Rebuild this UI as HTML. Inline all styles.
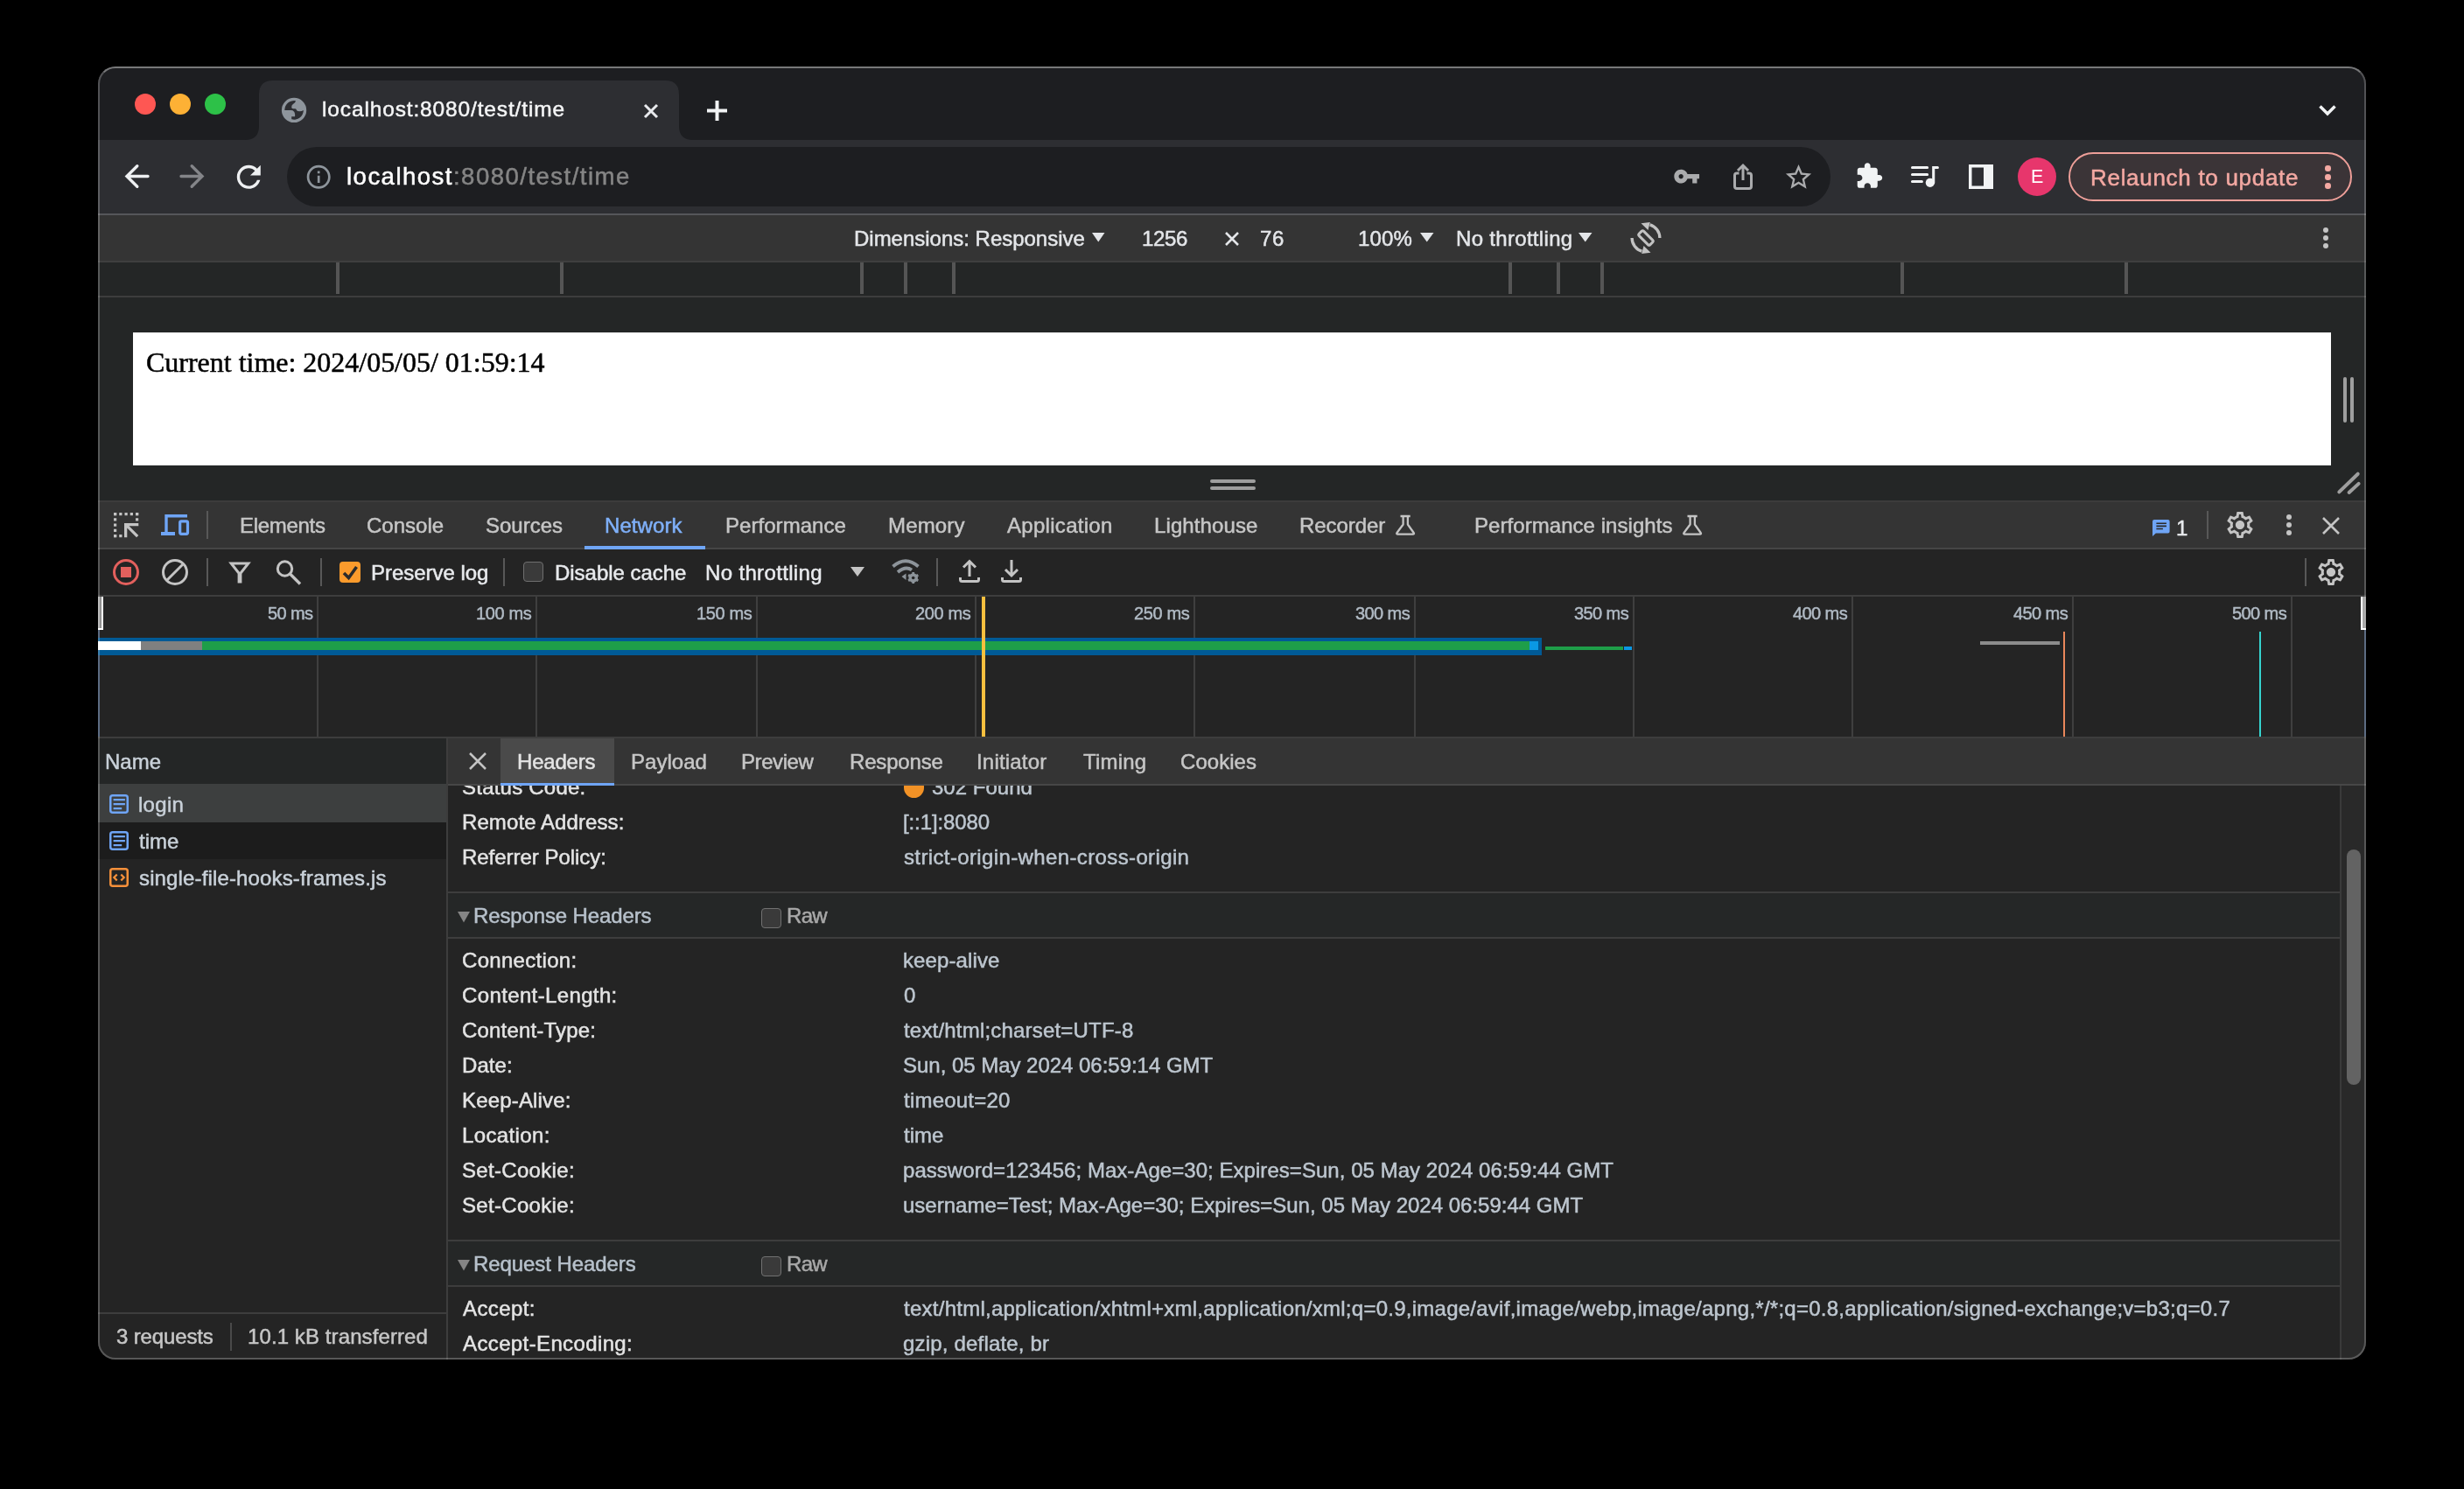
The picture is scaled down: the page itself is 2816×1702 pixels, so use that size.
<!DOCTYPE html>
<html><head><meta charset="utf-8"><title>localhost:8080/test/time</title>
<style>
*{box-sizing:border-box;margin:0;padding:0}
html,body{width:2816px;height:1702px;background:#000;overflow:hidden}
body{position:relative;font-family:"Liberation Sans",sans-serif;font-size:24px;color:#e8eaed}
.win{position:absolute;left:112px;top:76px;width:2592px;height:1478px;border-radius:20px;overflow:hidden;background:#242424}
.o{position:absolute;left:-112px;top:-76px;width:2816px;height:1702px}
.a{position:absolute}
.t{position:absolute;white-space:pre;line-height:1;will-change:transform;-webkit-text-stroke:0.5px currentColor}
.winborder{position:absolute;left:112px;top:76px;width:2592px;height:1478px;border-radius:20px;border:2px solid rgba(255,255,255,0.235);border-top-color:rgba(255,255,255,0.40);pointer-events:none}
.hl{position:absolute;height:2px}
.vl{position:absolute;width:2px}
svg{position:absolute;overflow:visible}
</style></head><body>
<div class="win"><div class="o">
<div class="a" style="left:112px;top:76px;width:2592px;height:84px;background:#1d1e21;"></div>
<div class="a" style="left:154px;top:107px;width:24px;height:24px;background:#fe5753;border-radius:50%"></div>
<div class="a" style="left:194px;top:107px;width:24px;height:24px;background:#fdb135;border-radius:50%"></div>
<div class="a" style="left:234px;top:107px;width:24px;height:24px;background:#2dc148;border-radius:50%"></div>
<svg style="left:280px;top:92px" width="512" height="68"><path d="M0 68 Q16 68 16 52 V16 Q16 0 32 0 H480 Q496 0 496 16 V52 Q496 68 512 68 Z" fill="#2d2e32"/></svg>
<svg style="left:316px;top:106px" width="40" height="40"><circle cx="20.050" cy="19.900" r="14.150" fill="#8e959c"/><path d="M9.250 19.900A10.800 10.800 0 0 1 22 9.250Q21.500 11.500 19.500 12.500Q17 14 17.200 16.500Q17.200 18.300 19 18.300H21.300Q22.800 18.500 23 20Q23.500 21.200 26.600 21.300Q28.800 21.200 30.850 19.900A10.800 10.800 0 0 1 17.200 30.350V27.300H21.100V24.500Q21 21.800 18.500 20.300Q17.500 19.900 16.500 19.900Z" fill="#2d2e32"/></svg>
<svg style="left:736px;top:118.5px" width="16" height="16"><path d="M1 1L15 15M15 1L1 15" stroke="#e8eaed" stroke-width="3" fill="none"/></svg>
<svg style="left:808px;top:114.5px" width="23" height="23"><path d="M11.5 0V23M0 11.5H23" stroke="#f1f3f4" stroke-width="4" fill="none"/></svg>
<svg style="left:2650px;top:120px" width="20" height="12"><path d="M1.5 1.5L10 10L18.5 1.5" stroke="#f1f3f4" stroke-width="3.5" fill="none"/></svg>
<div class="a" style="left:112px;top:160px;width:2592px;height:84px;background:#2d2e32;"></div>
<div class="a" style="left:328px;top:168px;width:1764px;height:68px;background:#1d1e21;border-radius:34px"></div>
<svg style="left:140px;top:186px" width="32" height="32"><path d="M29 15.500H5M16.800 3.800L5 15.500L16.800 27.200" fill="none" stroke="#eef0f2" stroke-width="3.400" stroke-linecap="round"/></svg>
<svg style="left:204px;top:186px" width="32" height="32"><path d="M3 15.500H27M15.200 3.800L27 15.500L15.200 27.200" fill="none" stroke="#848589" stroke-width="3.400" stroke-linecap="round"/></svg>
<svg style="left:263.72px;top:181.72px" width="40.56" height="40.56" viewBox="0 0 24 24"><path d="M17.65 6.35C16.2 4.9 14.21 4 12 4c-4.42 0-7.99 3.58-7.99 8s3.57 8 7.99 8c3.73 0 6.84-2.55 7.73-6h-2.08c-.82 2.33-3.04 4-5.65 4-3.31 0-6-2.69-6-6s2.69-6 6-6c1.66 0 3.14.69 4.22 1.78L13 11h7V4l-2.35 2.35z" fill="#eef0f2" /></svg>
<svg style="left:347.80px;top:186.30px" width="32.40" height="32.40" viewBox="0 0 24 24"><path d="M11 7h2v2h-2zm0 4h2v6h-2zm1-9C6.48 2 2 6.48 2 12s4.48 10 10 10 10-4.48 10-10S17.52 2 12 2zm0 18c-4.41 0-8-3.59-8-8s3.590-8 8-8 8 3.590 8 8-3.590 8-8 8z" fill="#8e959c" /></svg>
<svg style="left:1912.32px;top:185.82px" width="31.37" height="31.37" viewBox="0 0 24 24"><path d="M12.65 10C11.83 7.67 9.61 6 7 6c-3.31 0-6 2.69-6 6s2.69 6 6 6c2.61 0 4.83-1.67 5.65-4H17v4h4v-4h2v-4H12.65zM7 14c-1.1 0-2-.9-2-2s.9-2 2-2 2 .9 2 2-.9 2-2 2z" fill="#aaabad" /></svg>
<svg style="left:1981px;top:187px" width="22" height="30"><path d="M6.5 11H4Q1.5 11 1.5 13.500V26Q1.5 28.500 4 28.500H18Q20.5 28.500 20.5 26V13.500Q20.5 11 18 11H15.500" stroke="#aaabad" stroke-width="3" fill="none"/><path d="M11 19V3M5 8L11 2L17 8" stroke="#aaabad" stroke-width="3" fill="none"/></svg>
<svg style="left:2038.48px;top:184.78px" width="35.04" height="35.04" viewBox="0 0 24 24"><path d="M22 9.24l-7.19-.62L12 2 9.19 8.63 2 9.24l5.46 4.73L5.82 21 12 17.27 18.18 21l-1.63-7.03L22 9.24zM12 15.4l-3.76 2.27 1-4.28-3.32-2.88 4.38-.38L12 6.1l1.71 4.04 4.38.38-3.32 2.88 1 4.28L12 15.4z" fill="#aaabad" /></svg>
<svg style="left:2119.72px;top:185.22px" width="32.57" height="32.57" viewBox="0 0 24 24"><path d="M20.5 11H19V7c0-1.1-.9-2-2-2h-4V3.5C13 2.12 11.88 1 10.5 1S8 2.12 8 3.5V5H4c-1.1 0-1.99.9-1.99 2v3.8H3.5c1.49 0 2.7 1.21 2.7 2.7s-1.21 2.7-2.7 2.7H2V20c0 1.1.9 2 2 2h3.8v-1.500c0-1.49 1.21-2.7 2.7-2.7 1.49 0 2.7 1.21 2.7 2.7V22H17c1.1 0 2-.9 2-2v-4h1.500c1.38 0 2.5-1.12 2.5-2.5S21.88 11 20.5 11z" fill="#f1f3f4" /></svg>
<svg style="left:2176px;top:180px" width="48" height="44"><g fill="none" stroke="#f1f3f4" stroke-width="3.100" stroke-linecap="round"><path d="M9.500 11.500H26.600M9.500 19.500H26.600M9.500 27.500H20.400M33.700 29V11.500H38.400"/></g><circle cx="29.800" cy="28.800" r="5.100" fill="#f1f3f4"/></svg>
<svg style="left:2250px;top:188px" width="28" height="28"><path d="M0 0H28V28H0Z M3.500 3.500V24.500H17V3.500Z" fill="#f1f3f4" fill-rule="evenodd"/></svg>
<div class="a" style="left:2306px;top:180px;width:44px;height:44px;background:#e7366c;border-radius:50%"></div>
<div class="a" style="left:2364px;top:174px;width:324px;height:56px;background:#3b3437;border-radius:28px;border:2px solid #ee9f99"></div>
<div class="a" style="left:2657px;top:189px;width:6.5px;height:6.5px;background:#f3a8a2;border-radius:50%"></div>
<div class="a" style="left:2657px;top:199px;width:6.5px;height:6.5px;background:#f3a8a2;border-radius:50%"></div>
<div class="a" style="left:2657px;top:209px;width:6.5px;height:6.5px;background:#f3a8a2;border-radius:50%"></div>
<div class="a" style="left:112px;top:244px;width:2592px;height:2px;background:#55565a"></div>
<div class="a" style="left:112px;top:246px;width:2592px;height:52px;background:#343434;"></div>
<div class="a" style="left:112px;top:298px;width:2592px;height:2px;background:#3f3f3f"></div>
<svg style="left:1247.5px;top:266px" width="14.5" height="10.5"><path d="M0 0H14.5L7.25 10.5Z" fill="#e4e6e9"/></svg>
<svg style="left:1400px;top:265px" width="16" height="16"><path d="M1 1L15 15M15 1L1 15" stroke="#e4e6e9" stroke-width="2.6" fill="none"/></svg>
<svg style="left:1622.5px;top:266px" width="15.5" height="10.5"><path d="M0 0H15.5L7.75 10.5Z" fill="#e4e6e9"/></svg>
<svg style="left:1803.5px;top:266px" width="15.5" height="10.5"><path d="M0 0H15.5L7.75 10.5Z" fill="#e4e6e9"/></svg>
<svg style="left:1863px;top:254px" width="36" height="36"><rect x="9.100" y="14.300" width="17.800" height="7.400" rx="1.800" fill="none" stroke="#c2c2c2" stroke-width="3" transform="rotate(45 18 18)"/><path d="M33.900 18A15.900 15.900 0 0 0 22.600 2.800" fill="none" stroke="#c2c2c2" stroke-width="3.300"/><path d="M12.500 1.300L22.800 0L20.500 8.900Z" fill="#c2c2c2"/><g transform="rotate(180 18 18)"><path d="M33.900 18A15.900 15.900 0 0 0 22.600 2.800" fill="none" stroke="#c2c2c2" stroke-width="3.300"/><path d="M12.500 1.300L22.800 0L20.500 8.900Z" fill="#c2c2c2"/></g></svg>
<div class="a" style="left:2655px;top:260px;width:6px;height:6px;background:#c4c4c4;border-radius:50%"></div>
<div class="a" style="left:2655px;top:269px;width:6px;height:6px;background:#c4c4c4;border-radius:50%"></div>
<div class="a" style="left:2655px;top:278px;width:6px;height:6px;background:#c4c4c4;border-radius:50%"></div>
<div class="a" style="left:112px;top:300px;width:2592px;height:38px;background:#242626;"></div>
<div class="a" style="left:112px;top:338px;width:2592px;height:2px;background:#3d3d3d"></div>
<div class="a" style="left:1088px;top:300px;width:4px;height:36px;background:#555"></div>
<div class="a" style="left:1724px;top:300px;width:4px;height:36px;background:#555"></div>
<div class="a" style="left:1033px;top:300px;width:4px;height:36px;background:#555"></div>
<div class="a" style="left:1779px;top:300px;width:4px;height:36px;background:#555"></div>
<div class="a" style="left:983px;top:300px;width:4px;height:36px;background:#555"></div>
<div class="a" style="left:1829px;top:300px;width:4px;height:36px;background:#555"></div>
<div class="a" style="left:640px;top:300px;width:4px;height:36px;background:#555"></div>
<div class="a" style="left:2172px;top:300px;width:4px;height:36px;background:#555"></div>
<div class="a" style="left:384px;top:300px;width:4px;height:36px;background:#555"></div>
<div class="a" style="left:2428px;top:300px;width:4px;height:36px;background:#555"></div>
<div class="a" style="left:112px;top:340px;width:2592px;height:232px;background:#242626;"></div>
<div class="a" style="left:152px;top:380px;width:2512px;height:152px;background:#fff;"></div>
<div class="a" style="left:2678px;top:431px;width:4px;height:52px;background:#9e9e9e;border-radius:2px"></div>
<div class="a" style="left:2686px;top:431px;width:4px;height:52px;background:#9e9e9e;border-radius:2px"></div>
<div class="a" style="left:1383px;top:548px;width:52px;height:4px;background:#9e9e9e;border-radius:2px"></div>
<div class="a" style="left:1383px;top:556px;width:52px;height:4px;background:#9e9e9e;border-radius:2px"></div>
<svg style="left:2668px;top:536px" width="32" height="32"><path d="M5.300 26.400L26.700 5.700M16.600 27L27.600 16.900" stroke="#9e9e9e" stroke-width="4" stroke-linecap="round" fill="none"/></svg>
<div class="a" style="left:112px;top:572px;width:2592px;height:2px;background:#3c3c3c"></div>
<div class="a" style="left:112px;top:574px;width:2592px;height:52px;background:#343434;"></div>
<div class="a" style="left:112px;top:626px;width:2592px;height:2px;background:#464646"></div>
<svg style="left:130px;top:586px" width="28.3" height="28.3"><g fill="#c4c4c4"><rect x="0.0" y="0" width="3.2" height="3.2"/><rect x="0" y="0.0" width="3.2" height="3.2"/><rect x="0.0" y="25" width="3.2" height="3.2"/><rect x="25" y="0.0" width="3.2" height="3.2"/><rect x="6.25" y="0" width="3.2" height="3.2"/><rect x="0" y="6.25" width="3.2" height="3.2"/><rect x="6.25" y="25" width="3.2" height="3.2"/><rect x="25" y="6.25" width="3.2" height="3.2"/><rect x="12.5" y="0" width="3.2" height="3.2"/><rect x="0" y="12.5" width="3.2" height="3.2"/><rect x="18.75" y="0" width="3.2" height="3.2"/><rect x="0" y="18.75" width="3.2" height="3.2"/><rect x="25.0" y="0" width="3.2" height="3.2"/><rect x="0" y="25.0" width="3.2" height="3.2"/><path d="M12 12H28.300V15.300H17.500L28.300 26L26 28.300L15.300 17.500V28.300H12Z"/></g></svg>
<svg style="left:184px;top:588px" width="32" height="24"><g fill="none" stroke="#6fa5f6"><path d="M30 1.700H6V20" stroke-width="3.400"/><path d="M0 22H16" stroke-width="4"/><rect x="21.700" y="7.800" width="8.800" height="14.500" rx="1.500" stroke-width="3.200"/></g></svg>
<div class="a" style="left:236px;top:584px;width:2px;height:32px;background:#585858"></div>
<div class="a" style="left:668px;top:624px;width:138px;height:4px;background:#6fa5f6;"></div>
<svg style="left:1595px;top:588px" width="24" height="24"><path d="M5.500 2H16.700M8.600 2V11.500L1.500 21Q0.500 22.600 2.500 22.600H19.700Q21.700 22.600 20.700 21L13.900 11.500V2" fill="none" stroke="#c4c4c4" stroke-width="2.300" stroke-linejoin="round"/></svg>
<svg style="left:1923px;top:588px" width="24" height="24"><path d="M5.500 2H16.700M8.600 2V11.500L1.500 21Q0.500 22.600 2.500 22.600H19.700Q21.700 22.600 20.700 21L13.900 11.500V2" fill="none" stroke="#c4c4c4" stroke-width="2.300" stroke-linejoin="round"/></svg>
<svg style="left:2460px;top:593.5px" width="20" height="19"><path d="M2 0H17.600Q19.600 0 19.600 2V13.500Q19.600 15.500 17.600 15.500H3.800L0 19V2Q0 0 2 0Z" fill="#6fa5f6"/><path d="M4.400 3.500H15.900V5.100H4.400ZM4.400 6.600H15.900V8.200H4.400ZM4.400 9.700H11.900V11.300H4.400Z" fill="#2a2a2a"/></svg>
<div class="a" style="left:2522px;top:584px;width:2px;height:32px;background:#585858"></div>
<svg style="left:2541.50px;top:582.00px" width="36.00" height="36.00" viewBox="0 0 24 24"><path d="M19.43 12.98c.04-.32.07-.64.07-.98 0-.34-.03-.66-.07-.98l2.11-1.65c.19-.15.24-.42.12-.64l-2-3.46c-.09-.16-.26-.25-.44-.25-.06 0-.12.01-.17.03l-2.49 1c-.52-.4-1.080-.73-1.690-.98l-.38-2.650C14.460 2.180 14.250 2 14 2h-4c-.25 0-.46.18-.49.42l-.38 2.650c-.61.25-1.170.59-1.690.98l-2.490-1c-.06-.02-.12-.03-.18-.03-.17 0-.34.09-.43.25l-2 3.460c-.13.22-.07.49.12.64l2.110 1.650c-.04.32-.07.65-.07.980 0 .33.03.66.07.98l-2.110 1.650c-.19.15-.24.42-.12.64l2 3.460c.09.16.26.25.44.25.06 0 .12-.01.17-.03l2.490-1c.52.4 1.080.73 1.690.98l.38 2.650c.03.24.24.42.49.42h4c.25 0 .46-.18.49-.42l.38-2.650c.61-.25 1.170-.59 1.690-.98l2.490 1c.06.02.12.03.18.03.17 0 .34-.09.43-.25l2-3.460c.12-.22.07-.49-.12-.64l-2.110-1.650zm-1.980-1.710c.04.31.05.52.05.73 0 .21-.02.43-.05.73l-.14 1.130.89.7 1.080.84-.7 1.210-1.270-.51-1.040-.42-.9.68c-.43.32-.84.56-1.250.73l-1.060.43-.16 1.130-.2 1.350h-1.400l-.19-1.350-.16-1.130-1.060-.43c-.43-.18-.83-.41-1.230-.71l-.91-.7-1.060.43-1.270.51-.7-1.210 1.080-.84.89-.7-.14-1.130c-.03-.31-.05-.54-.05-.74s.02-.43.05-.73l.14-1.130-.89-.7-1.080-.84.7-1.210 1.270.51 1.040.42.9-.68c.43-.32.84-.56 1.250-.73l1.060-.43.16-1.130.2-1.350h1.390l.19 1.350.16 1.130 1.060.43c.43.18.83.41 1.230.71l.91.7 1.060-.43 1.270-.51.7 1.210-1.070.85-.89.7.14 1.130zM12 8.600c-1.880 0-3.400 1.520-3.400 3.400s1.520 3.400 3.400 3.400 3.400-1.520 3.400-3.400-1.520-3.400-3.400-3.400z" fill="#c4c4c4" /></svg>
<div class="a" style="left:2613px;top:588px;width:6px;height:6px;background:#c4c4c4;border-radius:50%"></div>
<div class="a" style="left:2613px;top:597px;width:6px;height:6px;background:#c4c4c4;border-radius:50%"></div>
<div class="a" style="left:2613px;top:606px;width:6px;height:6px;background:#c4c4c4;border-radius:50%"></div>
<svg style="left:2654px;top:590.5px" width="20" height="20"><path d="M1 1L19 19M19 1L1 19" stroke="#c4c4c4" stroke-width="2.600" fill="none"/></svg>
<div class="a" style="left:112px;top:628px;width:2592px;height:52px;background:#242424;"></div>
<div class="a" style="left:112px;top:680px;width:2592px;height:2px;background:#3d3d3d"></div>
<svg style="left:129px;top:639px" width="30" height="30"><circle cx="15" cy="15" r="13.500" fill="none" stroke="#e3605d" stroke-width="3"/><rect x="9" y="9" width="12" height="12" fill="#e3605d"/></svg>
<svg style="left:185px;top:639px" width="30" height="30"><circle cx="15" cy="15" r="13.500" fill="none" stroke="#c4c4c4" stroke-width="3"/><path d="M5.500 24.500L24.500 5.500" stroke="#c4c4c4" stroke-width="3"/></svg>
<div class="a" style="left:236px;top:638px;width:2px;height:32px;background:#585858"></div>
<svg style="left:262px;top:642px" width="24" height="24"><path d="M2.200 2H21.800L12.900 13.200V23H11.100V13.200Z" fill="none" stroke="#c4c4c4" stroke-width="3" stroke-linejoin="miter"/></svg>
<svg style="left:315px;top:640px" width="30" height="30"><circle cx="10.500" cy="10" r="8.200" fill="none" stroke="#c4c4c4" stroke-width="3"/><path d="M16.500 16L28 27.500" stroke="#c4c4c4" stroke-width="3.400"/></svg>
<div class="a" style="left:366px;top:638px;width:2px;height:32px;background:#585858"></div>
<div class="a" style="left:388px;top:642px;width:24px;height:24px;background:#fb9b2c;border-radius:4px"></div>
<svg style="left:388px;top:642px" width="24" height="24"><path d="M5 13L10.500 18.500L19.500 6" fill="none" stroke="#2b2b2b" stroke-width="3.600"/></svg>
<div class="a" style="left:574.5px;top:638px;width:2px;height:32px;background:#585858"></div>
<div class="a" style="left:597.5px;top:642px;width:23px;height:23px;background:#3a3a3a;border-radius:4px;border:1.500px solid #6e6e6e"></div>
<svg style="left:972px;top:647.5px" width="16" height="11.100000000000023"><path d="M0 0H16L8.0 11.100000000000023Z" fill="#c4c4c4"/></svg>
<svg style="left:1019px;top:638px" width="32" height="26"><g fill="none" stroke="#8d949a" stroke-width="3.800"><path d="M1.500 9.500Q16 -3 30.500 9.500"/><path d="M7 16Q16 8.500 23 13.500"/></g><path d="M11.500 21L16.500 17.500V25Z" fill="#8d949a"/><g transform="translate(24.700 22.500)"><circle r="4" fill="none" stroke="#8d949a" stroke-width="2.600"/><g stroke="#8d949a" stroke-width="2.800"><path d="M0 -6.500V6.500M-5.600 -3.250L5.600 3.250M-5.600 3.250L5.600 -3.250"/></g><circle r="1.800" fill="#242424"/></g></svg>
<div class="a" style="left:1070px;top:638px;width:2px;height:32px;background:#585858"></div>
<svg style="left:1096px;top:638px" width="24" height="30"><g fill="none" stroke="#c4c4c4" stroke-width="3"><path d="M1.500 22V24.500Q1.500 26.500 3.500 26.500H20.500Q22.500 26.500 22.500 24.500V22"/><path d="M12 21V4M5 10.500L12 3.500L19 10.500"/></g></svg>
<svg style="left:1144px;top:638px" width="24" height="30"><g fill="none" stroke="#c4c4c4" stroke-width="3"><path d="M1.500 22V24.500Q1.500 26.500 3.500 26.500H20.500Q22.500 26.500 22.500 24.500V22"/><path d="M12 2V19M5 13L12 20L19 13"/></g></svg>
<div class="a" style="left:2634px;top:638px;width:2px;height:32px;background:#585858"></div>
<svg style="left:2645.80px;top:636.00px" width="36.00" height="36.00" viewBox="0 0 24 24"><path d="M19.43 12.98c.04-.32.07-.64.07-.98 0-.34-.03-.66-.07-.98l2.11-1.65c.19-.15.24-.42.12-.64l-2-3.46c-.09-.16-.26-.25-.44-.25-.06 0-.12.01-.17.03l-2.49 1c-.52-.4-1.080-.73-1.690-.98l-.38-2.650C14.460 2.180 14.250 2 14 2h-4c-.25 0-.46.18-.49.42l-.38 2.650c-.61.25-1.170.59-1.690.98l-2.490-1c-.06-.02-.12-.03-.18-.03-.17 0-.34.09-.43.25l-2 3.460c-.13.22-.07.49.12.64l2.110 1.650c-.04.32-.07.65-.07.980 0 .33.03.66.07.98l-2.110 1.650c-.19.15-.24.42-.12.64l2 3.460c.09.16.26.25.44.25.06 0 .12-.01.17-.03l2.490-1c.52.4 1.080.73 1.690.98l.38 2.650c.03.24.24.42.49.42h4c.25 0 .46-.18.49-.42l.38-2.650c.61-.25 1.170-.59 1.690-.98l2.490 1c.06.02.12.03.18.03.17 0 .34-.09.43-.25l2-3.460c.12-.22.07-.49-.12-.64l-2.110-1.650zm-1.980-1.710c.04.31.05.52.05.73 0 .21-.02.43-.05.73l-.14 1.130.89.7 1.080.84-.7 1.210-1.270-.51-1.040-.42-.9.68c-.43.32-.84.56-1.250.73l-1.060.43-.16 1.130-.2 1.350h-1.400l-.19-1.350-.16-1.130-1.060-.43c-.43-.18-.83-.41-1.230-.71l-.91-.7-1.060.43-1.270.51-.7-1.210 1.080-.84.89-.7-.14-1.130c-.03-.31-.05-.54-.05-.74s.02-.43.05-.73l.14-1.130-.89-.7-1.080-.84.7-1.210 1.270.51 1.040.42.9-.68c.43-.32.84-.56 1.250-.73l1.060-.43.16-1.130.2-1.350h1.390l.19 1.350.16 1.130 1.060.43c.43.18.83.41 1.230.71l.91.7 1.060-.43 1.270-.51.7 1.210-1.070.85-.89.7.14 1.130zM12 8.600c-1.880 0-3.400 1.520-3.400 3.400s1.520 3.400 3.400 3.400 3.400-1.520 3.400-3.400-1.520-3.400-3.400-3.400z" fill="#c4c4c4" /></svg>
<div class="a" style="left:112px;top:682px;width:2592px;height:160px;background:#242424;"></div>
<div class="a" style="left:112px;top:720px;width:2px;height:122px;background:#2a3f5d;"></div>
<div class="a" style="left:2702px;top:720px;width:2px;height:122px;background:#2a3f5d;"></div>
<div class="a" style="left:362px;top:682px;width:2px;height:160px;background:#3f3f3f"></div>
<div class="a" style="left:612px;top:682px;width:2px;height:160px;background:#3f3f3f"></div>
<div class="a" style="left:864px;top:682px;width:2px;height:160px;background:#3f3f3f"></div>
<div class="a" style="left:1114px;top:682px;width:2px;height:160px;background:#3f3f3f"></div>
<div class="a" style="left:1364px;top:682px;width:2px;height:160px;background:#3f3f3f"></div>
<div class="a" style="left:1616px;top:682px;width:2px;height:160px;background:#3f3f3f"></div>
<div class="a" style="left:1866px;top:682px;width:2px;height:160px;background:#3f3f3f"></div>
<div class="a" style="left:2116px;top:682px;width:2px;height:160px;background:#3f3f3f"></div>
<div class="a" style="left:2368px;top:682px;width:2px;height:160px;background:#3f3f3f"></div>
<div class="a" style="left:2618px;top:682px;width:2px;height:160px;background:#3f3f3f"></div>
<div class="a" style="left:112px;top:729px;width:1650px;height:20px;background:#005a96;"></div>
<div class="a" style="left:112px;top:733px;width:49px;height:10px;background:#ffffff;"></div>
<div class="a" style="left:161px;top:733px;width:69.5px;height:10px;background:#808080;"></div>
<div class="a" style="left:230.5px;top:733px;width:1517.5px;height:10px;background:#1e9e49;"></div>
<div class="a" style="left:1748px;top:733px;width:10px;height:10px;background:#0a98e4;"></div>
<div class="a" style="left:1766px;top:739px;width:88.5px;height:4px;background:#1e9e49;"></div>
<div class="a" style="left:1856px;top:739px;width:8.5px;height:4px;background:#0a98e4;"></div>
<div class="a" style="left:2263px;top:733px;width:91px;height:4px;background:#8c8c8c;"></div>
<div class="a" style="left:1122px;top:682px;width:4px;height:160px;background:#f7c03f;"></div>
<div class="a" style="left:2358px;top:722px;width:2px;height:120px;background:#e9875b;"></div>
<div class="a" style="left:2582px;top:722px;width:2px;height:120px;background:#36d4cf;"></div>
<div class="a" style="left:112px;top:682px;width:6px;height:38px;background:#fff;"></div>
<div class="a" style="left:112px;top:682px;width:4px;height:36px;background:linear-gradient(90deg,#b4b4b4,#858585);"></div>
<div class="a" style="left:2698px;top:682px;width:6px;height:38px;background:#fff;"></div>
<div class="a" style="left:2700px;top:682px;width:4px;height:36px;background:linear-gradient(90deg,#b4b4b4,#858585);"></div>
<div class="a" style="left:112px;top:842px;width:2592px;height:2px;background:#3d3d3d"></div>
<div class="a" style="left:112px;top:844px;width:2592px;height:710px;background:#242424;"></div>
<div class="a" style="left:112px;top:844px;width:398px;height:52px;background:#242626;"></div>
<div class="a" style="left:112px;top:896px;width:398px;height:44px;background:#3d3f3f;"></div>
<div class="a" style="left:112px;top:940px;width:398px;height:42px;background:#1c1c1c;"></div>
<div class="a" style="left:510px;top:844px;width:2px;height:710px;background:#3d3d3d"></div>
<svg style="left:125px;top:908px" width="22" height="22"><rect x="1.250" y="1.250" width="19.500" height="19.500" rx="2.500" fill="none" stroke="#6fa5f6" stroke-width="2.500"/><path d="M4.600 5H17.900V7.200H4.600ZM4.600 10H17.900V12.200H4.600ZM4.600 15H14.200V17.200H4.600Z" fill="#6fa5f6"/></svg>
<svg style="left:125px;top:950px" width="22" height="22"><rect x="1.250" y="1.250" width="19.500" height="19.500" rx="2.500" fill="none" stroke="#6fa5f6" stroke-width="2.500"/><path d="M4.600 5H17.900V7.200H4.600ZM4.600 10H17.900V12.200H4.600ZM4.600 15H14.200V17.200H4.600Z" fill="#6fa5f6"/></svg>
<svg style="left:125px;top:992px" width="22" height="22"><rect x="1.250" y="1.250" width="19.500" height="19.500" rx="2.500" fill="none" stroke="#f5903a" stroke-width="2.500"/><path d="M8.700 7.600L5.300 11L8.700 14.400M13.300 7.600L16.700 11L13.300 14.400" fill="none" stroke="#f5903a" stroke-width="2.200"/></svg>
<div class="a" style="left:112px;top:1500px;width:398px;height:2px;background:#3d3d3d"></div>
<div class="a" style="left:263px;top:1512px;width:2px;height:32px;background:#4a4a4a"></div>
<div class="a" style="left:512px;top:844px;width:2192px;height:52px;background:#343434;"></div>
<div class="a" style="left:512px;top:896px;width:2192px;height:2px;background:#474747"></div>
<div class="a" style="left:572px;top:844px;width:130px;height:52px;background:#4a4a4a;"></div>
<div class="a" style="left:572px;top:895px;width:130px;height:3px;background:#6fa5f6;"></div>
<svg style="left:536px;top:860px" width="20" height="20"><path d="M1 1L19 19M19 1L1 19" stroke="#c4c4c4" stroke-width="2.500" fill="none"/></svg>
<div class="a" style="left:2674px;top:898px;width:28px;height:656px;background:#292929;"></div>
<div class="a" style="left:2674px;top:898px;width:2px;height:656px;background:#3a3a3a"></div>
<div class="a" style="left:2682px;top:971px;width:16px;height:269px;background:#636363;border-radius:8px"></div>
<div class="t" style="left:368.2px;top:113.3px;font-size:24.5px;color:#f4f5f6;letter-spacing:0.858px;">localhost:8080/test/time</div>
<div class="t" style="left:395.9px;top:188.3px;font-size:27.6px;color:#858585;letter-spacing:1.450px;"><span style="color:#fff">localhost</span>:8080/test/time</div>
<div class="t" style="left:2321.0px;top:191.8px;font-size:21.5px;color:#fff;-webkit-text-stroke-width:0px;">E</div>
<div class="t" style="left:2389.2px;top:189.7px;font-size:26px;color:#f3a8a2;letter-spacing:0.703px;">Relaunch to update</div>
<div class="t" style="left:976.2px;top:260.7px;color:#e4e6e9;letter-spacing:-0.013px;">Dimensions: Responsive</div>
<div class="t" style="left:1305.2px;top:260.7px;color:#e4e6e9;letter-spacing:-0.348px;">1256</div>
<div class="t" style="left:1440.2px;top:260.7px;color:#e4e6e9;letter-spacing:0.652px;">76</div>
<div class="t" style="left:1552.2px;top:260.7px;color:#e4e6e9;letter-spacing:0.152px;">100%</div>
<div class="t" style="left:1664.0px;top:260.7px;color:#e4e6e9;letter-spacing:0.312px;">No throttling</div>
<div class="t" style="left:167.2px;top:398.2px;font-family:'Liberation Serif';font-size:32px;color:#000;letter-spacing:-0.014px;">Current time: 2024/05/05/ 01:59:14</div>
<div class="t" style="left:273.8px;top:588.7px;color:#c6c6c6;letter-spacing:-0.292px;">Elements</div>
<div class="t" style="left:419.0px;top:588.7px;color:#c6c6c6;letter-spacing:0.007px;">Console</div>
<div class="t" style="left:554.8px;top:588.7px;color:#c6c6c6;letter-spacing:-0.007px;">Sources</div>
<div class="t" style="left:691.2px;top:588.7px;color:#7fb0f9;letter-spacing:0.080px;">Network</div>
<div class="t" style="left:829.2px;top:588.7px;color:#c6c6c6;letter-spacing:0.046px;">Performance</div>
<div class="t" style="left:1015.2px;top:588.7px;color:#c6c6c6;letter-spacing:0.166px;">Memory</div>
<div class="t" style="left:1151.2px;top:588.7px;color:#c6c6c6;letter-spacing:0.294px;">Application</div>
<div class="t" style="left:1319.2px;top:588.7px;color:#c6c6c6;letter-spacing:0.102px;">Lighthouse</div>
<div class="t" style="left:1485.2px;top:588.7px;color:#c6c6c6;letter-spacing:-0.066px;">Recorder</div>
<div class="t" style="left:1685.2px;top:588.7px;color:#c6c6c6;letter-spacing:0.056px;">Performance insights</div>
<div class="t" style="left:2487.2px;top:591.7px;">1</div>
<div class="t" style="left:423.5px;top:642.7px;letter-spacing:-0.035px;">Preserve log</div>
<div class="t" style="left:633.5px;top:642.7px;letter-spacing:-0.034px;">Disable cache</div>
<div class="t" style="left:806.2px;top:642.7px;letter-spacing:0.350px;">No throttling</div>
<div class="t" style="left:305.8px;top:690.8px;font-size:20px;color:#b0bac4;letter-spacing:-0.616px;">50 ms</div>
<div class="t" style="left:544.0px;top:690.8px;font-size:20px;color:#b0bac4;letter-spacing:-0.377px;">100 ms</div>
<div class="t" style="left:796.0px;top:690.8px;font-size:20px;color:#b0bac4;letter-spacing:-0.377px;">150 ms</div>
<div class="t" style="left:1046.0px;top:690.8px;font-size:20px;color:#b0bac4;letter-spacing:-0.377px;">200 ms</div>
<div class="t" style="left:1296.0px;top:690.8px;font-size:20px;color:#b0bac4;letter-spacing:-0.377px;">250 ms</div>
<div class="t" style="left:1549.0px;top:690.8px;font-size:20px;color:#b0bac4;letter-spacing:-0.577px;">300 ms</div>
<div class="t" style="left:1799.0px;top:690.8px;font-size:20px;color:#b0bac4;letter-spacing:-0.577px;">350 ms</div>
<div class="t" style="left:2049.1px;top:690.8px;font-size:20px;color:#b0bac4;letter-spacing:-0.577px;">400 ms</div>
<div class="t" style="left:2301.1px;top:690.8px;font-size:20px;color:#b0bac4;letter-spacing:-0.577px;">450 ms</div>
<div class="t" style="left:2551.1px;top:690.8px;font-size:20px;color:#b0bac4;letter-spacing:-0.577px;">500 ms</div>
<div class="t" style="left:119.8px;top:858.7px;color:#c9d1d9;">Name</div>
<div class="t" style="left:158.0px;top:907.5px;color:#c9d1d9;letter-spacing:0.285px;">login</div>
<div class="t" style="left:159.0px;top:949.5px;color:#c9d1d9;">time</div>
<div class="t" style="left:159.0px;top:991.5px;color:#c9d1d9;letter-spacing:0.144px;">single-file-hooks-frames.js</div>
<div class="t" style="left:132.7px;top:1516.4px;color:#c6c6c6;letter-spacing:-0.135px;">3 requests</div>
<div class="t" style="left:282.8px;top:1516.4px;color:#c6c6c6;letter-spacing:0.097px;">10.1 kB transferred</div>
<div class="t" style="left:591.2px;top:858.7px;color:#e4e4e4;letter-spacing:-0.202px;">Headers</div>
<div class="t" style="left:721.2px;top:858.7px;color:#c6c6c6;letter-spacing:0.020px;">Payload</div>
<div class="t" style="left:847.2px;top:858.7px;color:#c6c6c6;letter-spacing:-0.421px;">Preview</div>
<div class="t" style="left:971.2px;top:858.7px;color:#c6c6c6;letter-spacing:-0.175px;">Response</div>
<div class="t" style="left:1116.2px;top:858.7px;color:#c6c6c6;letter-spacing:0.192px;">Initiator</div>
<div class="t" style="left:1237.8px;top:858.7px;color:#c6c6c6;letter-spacing:0.195px;">Timing</div>
<div class="t" style="left:1348.8px;top:858.7px;color:#c6c6c6;letter-spacing:0.049px;">Cookies</div>
<div class="a" style="left:512px;top:898px;width:2162px;height:656px;overflow:hidden"><div class="a" style="left:-512px;top:-898px;width:2816px;height:1702px">
<div class="a" style="left:1032.5px;top:888.3px;width:23.5px;height:23.5px;background:#f29226;border-radius:50%"></div>
<div class="a" style="left:512px;top:1019px;width:2162px;height:54px;background:#252727;"></div>
<div class="a" style="left:512px;top:1019px;width:2162px;height:2px;background:#3d3d3d"></div>
<div class="a" style="left:512px;top:1071px;width:2162px;height:2px;background:#3d3d3d"></div>
<svg style="left:522.5px;top:1041.5px" width="14" height="12.5"><path d="M0 0H14L7 12.500Z" fill="#858585"/></svg>
<div class="a" style="left:869.5px;top:1037.5px;width:23px;height:23px;background:#3a3a3a;border-radius:4px;border:1.500px solid #717171"></div>
<div class="a" style="left:512px;top:1417px;width:2162px;height:54px;background:#252727;"></div>
<div class="a" style="left:512px;top:1417px;width:2162px;height:2px;background:#3d3d3d"></div>
<div class="a" style="left:512px;top:1469px;width:2162px;height:2px;background:#3d3d3d"></div>
<svg style="left:522.5px;top:1439.5px" width="14" height="12.5"><path d="M0 0H14L7 12.500Z" fill="#858585"/></svg>
<div class="a" style="left:869.5px;top:1435.5px;width:23px;height:23px;background:#3a3a3a;border-radius:4px;border:1.500px solid #717171"></div>
<div class="t" style="left:527.8px;top:887.7px;color:#e4e4e4;letter-spacing:0.229px;">Status Code:</div>
<div class="t" style="left:1064.5px;top:887.7px;color:#bdc6cf;letter-spacing:0.011px;">302 Found</div>
<div class="t" style="left:527.8px;top:927.9px;color:#e4e4e4;letter-spacing:0.090px;">Remote Address:</div>
<div class="t" style="left:1031.7px;top:927.9px;color:#bdc6cf;letter-spacing:-0.114px;">[::1]:8080</div>
<div class="t" style="left:527.8px;top:968.2px;color:#e4e4e4;letter-spacing:-0.030px;">Referrer Policy:</div>
<div class="t" style="left:1032.7px;top:968.2px;color:#bdc6cf;letter-spacing:0.374px;">strict-origin-when-cross-origin</div>
<div class="t" style="left:527.8px;top:1085.7px;color:#e4e4e4;letter-spacing:0.308px;">Connection:</div>
<div class="t" style="left:1031.7px;top:1085.7px;color:#bdc6cf;letter-spacing:0.106px;">keep-alive</div>
<div class="t" style="left:527.8px;top:1125.7px;color:#e4e4e4;letter-spacing:0.367px;">Content-Length:</div>
<div class="t" style="left:1032.7px;top:1125.7px;color:#bdc6cf;">0</div>
<div class="t" style="left:527.8px;top:1165.7px;color:#e4e4e4;letter-spacing:0.181px;">Content-Type:</div>
<div class="t" style="left:1032.7px;top:1165.7px;color:#bdc6cf;letter-spacing:0.194px;">text/html;charset=UTF-8</div>
<div class="t" style="left:527.8px;top:1205.7px;color:#e4e4e4;letter-spacing:0.076px;">Date:</div>
<div class="t" style="left:1031.7px;top:1205.7px;color:#bdc6cf;letter-spacing:-0.026px;">Sun, 05 May 2024 06:59:14 GMT</div>
<div class="t" style="left:527.8px;top:1245.7px;color:#e4e4e4;letter-spacing:0.169px;">Keep-Alive:</div>
<div class="t" style="left:1032.7px;top:1245.7px;color:#bdc6cf;letter-spacing:0.215px;">timeout=20</div>
<div class="t" style="left:527.8px;top:1285.7px;color:#e4e4e4;letter-spacing:0.376px;">Location:</div>
<div class="t" style="left:1032.7px;top:1285.7px;color:#bdc6cf;letter-spacing:0.036px;">time</div>
<div class="t" style="left:527.8px;top:1326.1px;color:#e4e4e4;letter-spacing:0.318px;">Set-Cookie:</div>
<div class="t" style="left:1031.7px;top:1326.1px;color:#bdc6cf;letter-spacing:0.044px;">password=123456; Max-Age=30; Expires=Sun, 05 May 2024 06:59:44 GMT</div>
<div class="t" style="left:527.8px;top:1366.1px;color:#e4e4e4;letter-spacing:0.318px;">Set-Cookie:</div>
<div class="t" style="left:1031.7px;top:1366.1px;color:#bdc6cf;letter-spacing:0.001px;">username=Test; Max-Age=30; Expires=Sun, 05 May 2024 06:59:44 GMT</div>
<div class="t" style="left:528.8px;top:1483.7px;color:#e4e4e4;letter-spacing:0.396px;">Accept:</div>
<div class="t" style="left:1032.7px;top:1483.7px;color:#bdc6cf;letter-spacing:0.255px;">text/html,application/xhtml+xml,application/xml;q=0.9,image/avif,image/webp,image/apng,*/*;q=0.8,application/signed-exchange;v=b3;q=0.7</div>
<div class="t" style="left:528.8px;top:1523.9px;color:#e4e4e4;letter-spacing:0.377px;">Accept-Encoding:</div>
<div class="t" style="left:1031.7px;top:1523.9px;color:#bdc6cf;letter-spacing:0.187px;">gzip, deflate, br</div>
<div class="t" style="left:540.8px;top:1034.5px;color:#b7c1cb;letter-spacing:-0.130px;">Response Headers</div>
<div class="t" style="left:898.6px;top:1034.5px;color:#a9a9a9;letter-spacing:-0.665px;">Raw</div>
<div class="t" style="left:540.8px;top:1432.5px;color:#b7c1cb;letter-spacing:-0.073px;">Request Headers</div>
<div class="t" style="left:898.6px;top:1432.5px;color:#a9a9a9;letter-spacing:-0.665px;">Raw</div>
</div></div>
</div></div>
<div class="winborder"></div>
</body></html>
